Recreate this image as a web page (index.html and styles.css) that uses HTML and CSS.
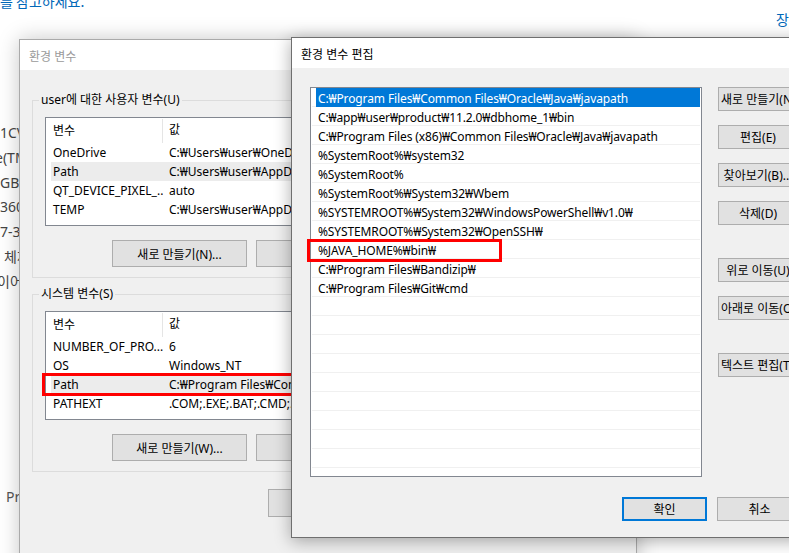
FILE: index.html
```html
<!DOCTYPE html>
<html>
<head>
<meta charset="utf-8">
<meta name="viewport" content="width=device-width,initial-scale=1.0">
<title>환경 변수 편집</title>
<link rel="stylesheet" href="styles.css">
</head>
<body>
<div class="desk">
  <p class="hint">를 참고하세요.</p>
  <span class="side-link">장</span>
  <div class="specs">
    <div>1CV</div>
    <div class="cut">e(TM</div>
    <div>GB</div>
    <div>360</div>
    <div>7-3</div>
    <div class="pad">체제</div>
    <div class="cut-s">이어</div>
  </div>
  <div class="specs-tail">Pr</div>

  <section class="win win-back">
    <header class="win-title">환경 변수</header>
    <div class="win-body">
      <fieldset class="group">
        <legend>user에 대한 사용자 변수(U)</legend>
        <div class="grid">
          <div class="grid-row grid-head"><span>변수</span><span>값</span></div>
          <div class="grid-row"><span>OneDrive</span><span>C:₩Users₩user₩OneDrive</span></div>
          <div class="grid-row is-current"><span>Path</span><span>C:₩Users₩user₩AppData₩Local₩Microsoft₩WindowsApps;</span></div>
          <div class="grid-row"><span>QT_DEVICE_PIXEL_...</span><span>auto</span></div>
          <div class="grid-row"><span>TEMP</span><span>C:₩Users₩user₩AppData₩Local₩Temp</span></div>
        </div>
        <div class="group-buttons">
          <button class="btn">새로 만들기(N)...</button>
          <button class="btn">편집(E)...</button>
          <button class="btn">삭제(D)</button>
        </div>
      </fieldset>
      <fieldset class="group">
        <legend>시스템 변수(S)</legend>
        <div class="grid">
          <div class="grid-row grid-head"><span>변수</span><span>값</span></div>
          <div class="grid-row"><span>NUMBER_OF_PRO...</span><span>6</span></div>
          <div class="grid-row"><span>OS</span><span>Windows_NT</span></div>
          <div class="grid-row is-current marked"><span>Path</span><span>C:₩Program Files₩Common Files₩Oracle₩Java₩javapath</span></div>
          <div class="grid-row"><span>PATHEXT</span><span>.COM;.EXE;.BAT;.CMD;.VBS;.VBE;.JS;.JSE</span></div>
        </div>
        <div class="group-buttons">
          <button class="btn">새로 만들기(W)...</button>
          <button class="btn">편집(I)...</button>
          <button class="btn">삭제(L)</button>
        </div>
      </fieldset>
      <div class="back-footer">
        <button class="btn">확인</button>
        <button class="btn">취소</button>
      </div>
    </div>
  </section>

  <section class="win win-front">
    <header class="win-title">환경 변수 편집</header>
    <div class="win-body edit-body">
      <div class="edit-main">
        <ul class="path-list">
          <li class="sel"><span>C:₩Program Files₩Common Files₩Oracle₩Java₩javapath</span></li>
          <li><span>C:₩app₩user₩product₩11.2.0₩dbhome_1₩bin</span></li>
          <li><span>C:₩Program Files (x86)₩Common Files₩Oracle₩Java₩javapath</span></li>
          <li><span>%SystemRoot%₩system32</span></li>
          <li><span>%SystemRoot%</span></li>
          <li><span>%SystemRoot%₩System32₩Wbem</span></li>
          <li><span>%SYSTEMROOT%₩System32₩WindowsPowerShell₩v1.0₩</span></li>
          <li><span>%SYSTEMROOT%₩System32₩OpenSSH₩</span></li>
          <li class="marked"><span>%JAVA_HOME%₩bin₩</span></li>
          <li><span>C:₩Program Files₩Bandizip₩</span></li>
          <li><span>C:₩Program Files₩Git₩cmd</span></li>
          <li></li>
          <li></li>
          <li></li>
          <li></li>
          <li></li>
          <li></li>
          <li></li>
          <li></li>
          <li></li>
        </ul>
        <div class="side-buttons">
          <button class="btn">새로 만들기(N)</button>
          <button class="btn">편집(E)</button>
          <button class="btn">찾아보기(B)...</button>
          <button class="btn">삭제(D)</button>
          <button class="btn spaced">위로 이동(U)</button>
          <button class="btn">아래로 이동(O)</button>
          <button class="btn spaced">텍스트 편집(T)...</button>
        </div>
      </div>
      <div class="edit-footer">
        <button class="btn btn-default">확인</button>
        <button class="btn">취소</button>
      </div>
    </div>
  </section>
</div>
</body>
</html>
```

FILE: styles.css
```css
*, *::before, *::after {
  box-sizing: border-box;
}
html, body {
  margin: 0;
  padding: 0;
}
body {
  font-family: "Noto Sans", "Noto Sans CJK KR", sans-serif;
  font-size: 12px;
  color: #000;
  background: #fff;
}
.desk {
  position: relative;
  width: 789px;
  height: 553px;
  overflow: hidden;
  background: #fff;
}

/* the settings page behind the dialogs */
.hint {
  position: absolute;
  left: 0;
  top: -9px;
  margin: 0;
  font-family: "Noto Sans CJK KR", sans-serif;
  font-size: 14px;
  line-height: 20px;
  color: #0067b8;
}
.side-link {
  position: absolute;
  left: 776px;
  top: 9px;
  font-family: "Noto Sans CJK KR", sans-serif;
  font-size: 14px;
  line-height: 20px;
  color: #0067b8;
}
.specs {
  position: absolute;
  left: 0;
  top: 121px;
  font-size: 14px;
  line-height: 24.8px;
  color: #444;
  white-space: nowrap;
}
.specs .cut {
  margin-left: -5px;
}
.specs .cut-s {
  margin-left: -3px;
}
.specs .pad {
  padding-left: 4px;
}
.specs-tail {
  position: absolute;
  left: 6px;
  top: 487px;
  font-size: 14px;
  line-height: 20px;
  color: #555;
}

/* windows */
.win {
  position: absolute;
  display: flex;
  flex-direction: column;
  background: #f0f0f0;
}
.win-back {
  left: 19px;
  top: 39px;
  width: 618px;
  height: 560px;
  border: 1px solid #aaa;
  box-shadow: 0 0 20px rgba(0, 0, 0, .22);
}
.win-front {
  left: 291px;
  top: 37px;
  width: 524px;
  height: 501px;
  border: 1px solid #6f6f6f;
  box-shadow: 0 3px 16px rgba(0, 0, 0, .33);
}
.win-title {
  flex: none;
  height: 30px;
  padding: 3px 0 0 9px;
  line-height: 27px;
  background: #fff;
}
.win-back .win-title {
  color: #9a9a9a;
}
.win-back .win-body {
  padding: 22px 12px 0 12px;
}

.btn {
  display: flex;
  align-items: center;
  justify-content: safe center;
  margin: 0;
  padding: 0 2px;
  font: inherit;
  color: #000;
  white-space: nowrap;
  background: #e1e1e1;
  border: 1px solid #adadad;
}

/* group boxes */
.group {
  margin: 0;
  padding: 9px 12px 10px 6px;
  min-width: 0;
  border: 1px solid #dcdcdc;
}
.group + .group {
  margin-top: 8px;
}
.group > legend {
  padding: 0 2px;
  line-height: 16px;
}
.grid {
  height: 109px;
  margin-left: 6px;
  padding-left: 5px;
  background: #fff;
  border: 1px solid #828790;
}
.grid-row {
  display: grid;
  grid-template-columns: 112px 1fr;
  height: 19px;
  line-height: 19px;
  white-space: nowrap;
}
.grid-row > span {
  overflow: hidden;
  padding-left: 2px;
}
.grid-row > span + span {
  padding-left: 6px;
}
.grid-head {
  height: 25px;
  line-height: 24px;
}
.grid-head > span:first-child {
  margin-top: 1px;
  border-right: 1px solid #e5e5e5;
}
.grid-row.is-current {
  background: #ececec;
}
.group-buttons {
  display: flex;
  gap: 9px;
  margin: 14px 0 0 73px;
}
.group-buttons .btn {
  width: 135px;
  height: 27px;
}
.back-footer {
  display: flex;
  gap: 9px;
  margin: 17px 0 0 236px;
}
.back-footer .btn {
  width: 135px;
  height: 28px;
}

/* red call-outs */
.marked {
  position: relative;
  overflow: visible;
}
.marked::after {
  content: "";
  position: absolute;
  border: 3px solid #f00;
}
.grid-row.marked::after {
  left: -9px;
  top: -2px;
  width: 300px;
  height: 23px;
}
.path-list li.marked::after {
  left: -5px;
  top: -1px;
  width: 195px;
  height: 23px;
}

/* edit dialog */
.edit-body {
  display: flex;
  flex-direction: column;
  padding: 19px 12px 0 18px;
}
.edit-main {
  display: flex;
  align-items: flex-start;
}
.path-list {
  flex: none;
  width: 392px;
  height: 390px;
  margin: 0;
  padding: 0 1px;
  list-style: none;
  letter-spacing: -.12px;
  background: #fff;
  border: 1px solid #828790;
}
.path-list li {
  display: flex;
  height: 19px;
  padding-left: 4px;
  border-bottom: 1px solid #f0f0f0;
}
.path-list li > span {
  flex: 1;
  padding: 2px 0 0 2px;
  line-height: 17px;
  white-space: nowrap;
}
.path-list li.sel > span {
  height: 19px;
  color: #fff;
  background: #0078d7;
}
.side-buttons {
  display: flex;
  flex-direction: column;
  gap: 14px;
  flex: none;
  width: 80px;
  margin-left: 16px;
}
.side-buttons .btn {
  height: 24px;
}
.side-buttons .spaced {
  margin-top: 19px;
}
.edit-footer {
  display: flex;
  justify-content: flex-end;
  gap: 10px;
  margin-top: 20px;
}
.edit-footer .btn {
  width: 85px;
  height: 24px;
}
.edit-footer .btn-default {
  border: 2px solid #0078d7;
}
```
